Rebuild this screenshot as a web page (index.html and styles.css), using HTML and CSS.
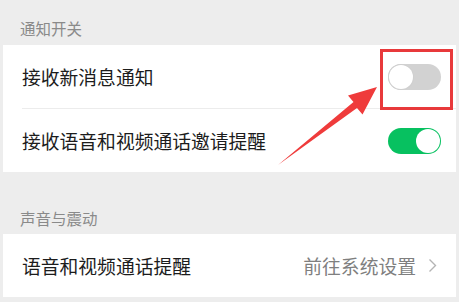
FILE: index.html
```html
<!DOCTYPE html>
<html lang="zh">
<head>
<meta charset="utf-8">
<link rel="stylesheet" href="styles.css">
</head>
<body>
<div class="page">
  <div class="section-title first">通知开关</div>
  <div class="group">
    <div class="row">
      <div class="row-inner divider">
        <span class="label">接收新消息通知</span>
        <span class="switch off"><span class="knob"></span></span>
      </div>
    </div>
    <div class="row">
      <div class="row-inner">
        <span class="label">接收语音和视频通话邀请提醒</span>
        <span class="switch on"><span class="knob"></span></span>
      </div>
    </div>
  </div>
  <div class="section-title second">声音与震动</div>
  <div class="group">
    <div class="row">
      <div class="row-inner link">
        <span class="label">语音和视频通话提醒</span>
        <span class="extra">前往系统设置
          <svg class="chev" width="9" height="15" viewBox="0 0 9 15"><polyline points="1.5,1.5 7.5,7.5 1.5,13.5" fill="none" stroke="#b4b4b4" stroke-width="1.4"/></svg>
        </span>
      </div>
    </div>
  </div>
  <div class="highlight"></div>
  <svg class="arrow" width="459" height="302" viewBox="0 0 459 302">
    <polygon points="278,165 353.5,102 348,95.5 377,87 362.5,114.5 357,108" fill="#ef3b3b"/>
  </svg>
</div>
</body>
</html>
```
FILE: styles.css
```css
* { box-sizing: border-box; }
html, body { margin: 0; padding: 0; }
body {
  background: #ededed;
  font-family: "Noto Sans CJK SC", "Noto Sans", sans-serif;
  width: 459px;
  height: 302px;
  overflow: hidden;
}
.page {
  position: relative;
  padding: 0 3px;
}
.section-title {
  display: flex;
  align-items: flex-end;
  padding-left: 17px;
  font-size: 15.5px;
  line-height: 20px;
  color: #8a8a8a;
}
.section-title.first { height: 45px; padding-bottom: 7px; }
.section-title.second { height: 62px; padding-bottom: 6px; }
.group { background: #fff; }
.row { padding-left: 19px; }
.row-inner {
  height: 63px;
  display: flex;
  align-items: center;
  justify-content: space-between;
  padding-right: 15px;
}
.row-inner.divider { border-bottom: 1px solid #ececec; height: 64px; }
.row-inner.link { padding-right: 19px; }
.label {
  font-size: 18.8px;
  color: #1c1c1c;
  letter-spacing: 0;
}
.switch {
  position: relative;
  width: 53px;
  height: 26px;
  border-radius: 13px;
  display: inline-block;
}
.switch.off { background: #d2d2d2; }
.switch.on { background: #07c160; }
.knob {
  position: absolute;
  top: 1px;
  width: 24px;
  height: 24px;
  border-radius: 50%;
  background: #fff;
}
.switch.off .knob { left: 1px; box-shadow: 0 0 0 1px #cfcfcf; }
.switch.on .knob { right: 1px; }
.extra {
  display: flex;
  align-items: center;
  gap: 12px;
  font-size: 18.8px;
  color: #7f7f7f;
}
.chev { display: block; }
.highlight {
  position: absolute;
  left: 380px;
  top: 49px;
  width: 73px;
  height: 61px;
  border: 3px solid #e8393b;
}
.arrow {
  position: absolute;
  left: 0;
  top: 0;
}
```
